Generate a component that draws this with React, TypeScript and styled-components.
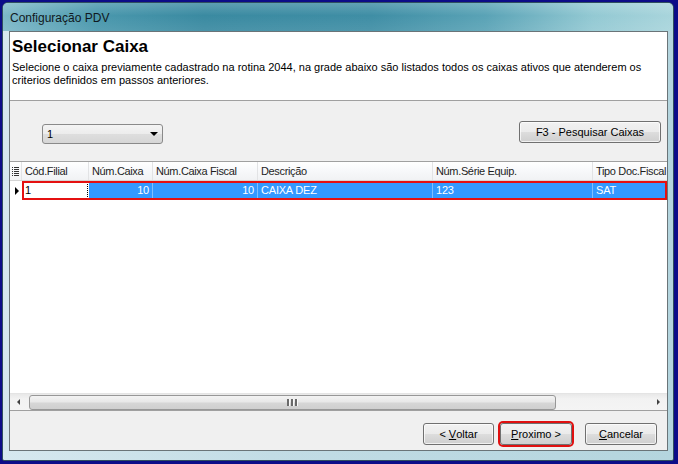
import React from "react";
import styled, { createGlobalStyle } from "styled-components";

const Global = createGlobalStyle`
  html, body { margin: 0; padding: 0; }
  body { width: 678px; height: 464px; overflow: hidden; background: #0c0c88; }
  * { box-sizing: border-box; }
`;

const UI_FONT = `"Liberation Sans", Arial, sans-serif`;

const Screen = styled.div`
  width: 678px;
  height: 464px;
  padding: 2px 4px 3px 2px;
  background: #0c0c88;
  font-family: ${UI_FONT};
`;

const Window = styled.div`
  width: 672px;
  height: 459px;
  border-radius: 6px 6px 2px 2px;
  border: 1px solid #2f4f5f;
  background: linear-gradient(90deg, #d6e8ef 0%, #c2dce5 40%, #b4d5de 100%);
  display: flex;
  flex-direction: column;
  overflow: hidden;
`;

const TitleBar = styled.div`
  height: 28px;
  flex: none;
  display: flex;
  align-items: center;
  padding: 2px 0 0 7px;
  background:
    linear-gradient(180deg, rgba(255,255,255,0.18) 0%, rgba(255,255,255,0) 45%, rgba(255,255,255,0.08) 100%),
    linear-gradient(90deg, #7db8c8 0%, #4a98ad 14%, #3a8aa1 30%, #3f8ea5 55%, #5aa3b6 72%, #93c9d3 88%, #a9d5dc 100%);
  font-size: 12px;
  color: #101820;
`;

const Client = styled.div`
  flex: 1;
  margin: 0 5px 9px 6px;
  border: 1px solid #6a7478;
  background: #f0f0f0;
  display: flex;
  flex-direction: column;
`;

const Header = styled.div`
  height: 69px;
  flex: none;
  background: #ffffff;
  border-bottom: 1px solid #a0a0a0;
  padding: 4px 0 0 2px;
`;

const Heading = styled.div`
  font-size: 17px;
  font-weight: bold;
  color: #000;
  line-height: 22px;
`;

const Description = styled.div`
  margin-top: 3px;
  font-size: 11px;
  line-height: 13px;
  color: #000;
  width: 630px;
`;

const Toolbar = styled.div`
  height: 60px;
  flex: none;
  display: flex;
  align-items: flex-start;
  justify-content: space-between;
  padding: 20px 6px 0 32px;
`;

const Combo = styled.div`
  margin-top: 3px;
  width: 121px;
  height: 20px;
  border: 1px solid #8a8a8a;
  border-radius: 3px;
  background: linear-gradient(180deg, #f4f4f4 0%, #ececec 50%, #dedede 51%, #d6d6d6 100%);
  display: flex;
  align-items: center;
  justify-content: space-between;
  padding: 0 4px 0 4px;
  font-size: 11px;
  color: #000;
`;

const Caret = styled.span`
  width: 0;
  height: 0;
  border-left: 4px solid transparent;
  border-right: 4px solid transparent;
  border-top: 4px solid #000;
`;

const Button = styled.div<{ $width: number; $highlight?: boolean; $gapLeft?: number }>`
  width: ${(p) => p.$width}px;
  height: 22px;
  margin-left: ${(p) => p.$gapLeft ?? 0}px;
  border: 1px solid #707070;
  border-radius: 3px;
  background: linear-gradient(180deg, #f2f2f2 0%, #ebebeb 48%, #dddddd 50%, #cfcfcf 100%);
  display: flex;
  align-items: center;
  justify-content: center;
  font-size: 11px;
  color: #000;
  box-shadow: ${(p) => (p.$highlight ? "0 0 0 2px #e01010" : "inset 0 0 0 1px rgba(255,255,255,0.7)")};
`;

const Underline = styled.span`
  text-decoration: underline;
`;

const Grid = styled.div`
  height: 250px;
  flex: none;
  background: #ffffff;
  border-top: 1px solid #a0a0a0;
  border-bottom: 1px solid #a0a0a0;
  display: flex;
  flex-direction: column;
  overflow: hidden;
`;

const cols = "12px 67px 64px 105px 175px 160px 80px";

const HeaderRow = styled.div`
  display: grid;
  grid-template-columns: ${cols};
  height: 19px;
  flex: none;
  background: linear-gradient(180deg, #ffffff 0%, #f7f8fa 50%, #f1f2f4 100%);
  border-bottom: 1px solid #d5d5d5;
`;

const HeadCell = styled.div`
  border-right: 1px solid #e2e3e5;
  padding: 0 1px 0 3px;
  font-size: 11px;
  letter-spacing: -0.35px;
  line-height: 18px;
  color: #1e1e1e;
  white-space: nowrap;
  overflow: hidden;
`;

const IndicatorHead = styled.div`
  border-right: 1px solid #e2e3e5;
  display: flex;
  align-items: center;
  justify-content: center;
`;

const DataRow = styled.div`
  position: relative;
  display: grid;
  grid-template-columns: ${cols};
  height: 19px;
  flex: none;
`;

const Indicator = styled.div`
  background: #ffffff;
  display: flex;
  align-items: center;
  justify-content: center;
`;

const Arrow = styled.span`
  width: 0;
  height: 0;
  border-top: 4px solid transparent;
  border-bottom: 4px solid transparent;
  border-left: 4px solid #000;
  margin-left: 1px;
`;

const Cell = styled.div<{ $right?: boolean; $focus?: boolean }>`
  background: ${(p) => (p.$focus ? "#ffffff" : "#3399ff")};
  color: ${(p) => (p.$focus ? "#000" : "#ffffff")};
  border-right: 1px solid ${(p) => (p.$focus ? "#ffffff" : "#7fbfff")};
  outline: ${(p) => (p.$focus ? "1px dotted #000" : "none")};
  outline-offset: -2px;
  padding: 0 3px;
  font-size: 11px;
  letter-spacing: -0.2px;
  line-height: 19px;
  text-align: ${(p) => (p.$right ? "right" : "left")};
  white-space: nowrap;
  overflow: hidden;
`;

const RowHighlight = styled.div`
  position: absolute;
  left: 12px;
  top: 0;
  right: 0;
  bottom: 0;
  border: 2px solid #e51010;
  pointer-events: none;
`;

const GridBody = styled.div`
  flex: 1;
  background: #ffffff;
`;

const ScrollBar = styled.div`
  height: 17px;
  flex: none;
  background: linear-gradient(180deg, #e8e8e8 0%, #f2f2f2 30%, #f4f4f4 100%);
  border-top: 1px solid #e4e4e4;
  display: flex;
  align-items: center;
`;

const ScrollArrow = styled.div<{ $dir: "left" | "right" }>`
  width: 17px;
  height: 16px;
  flex: none;
  display: flex;
  align-items: center;
  justify-content: center;
  &::before {
    content: "";
    width: 0;
    height: 0;
    border-top: 3px solid transparent;
    border-bottom: 3px solid transparent;
    ${(p) => (p.$dir === "left" ? "border-right: 3px solid #404040;" : "border-left: 3px solid #404040;")}
  }
`;

const Thumb = styled.div`
  width: 527px;
  height: 15px;
  margin-left: 2px;
  border: 1px solid #979797;
  border-radius: 3px;
  background: linear-gradient(180deg, #f3f3f3 0%, #e8e8e8 45%, #d6d6d6 55%, #cfcfcf 100%);
  display: flex;
  align-items: center;
  justify-content: center;
  gap: 1px;
`;

const Grip = styled.span`
  width: 2px;
  height: 7px;
  background: #6a6a6a;
  border-right: 1px solid #fafafa;
  box-sizing: content-box;
`;

const Spacer = styled.div`
  flex: 1;
`;

const Footer = styled.div`
  flex: 1;
  display: flex;
  justify-content: flex-end;
  align-items: flex-start;
  padding: 12px 10px 0 0;
`;

export default function App() {
  return (
    <>
      <Global />
      <Screen>
        <Window>
          <TitleBar>Configuração PDV</TitleBar>
          <Client>
            <Header>
              <Heading>Selecionar Caixa</Heading>
              <Description>
                Selecione o caixa previamente cadastrado na rotina 2044, na grade abaixo são listados todos os caixas ativos que atenderem os criterios definidos em passos anteriores.
              </Description>
            </Header>
            <Toolbar>
              <Combo>
                <span>1</span>
                <Caret />
              </Combo>
              <Button $width={142}>F3 - Pesquisar Caixas</Button>
            </Toolbar>
            <Grid>
              <HeaderRow>
                <IndicatorHead>
                  <svg width="7" height="9" viewBox="0 0 7 9">
                    <g fill="#333">
                      <rect x="0" y="0" width="1" height="1" />
                      <rect x="2" y="0" width="5" height="1" />
                      <rect x="0" y="2" width="1" height="1" />
                      <rect x="2" y="2" width="5" height="1" />
                      <rect x="0" y="4" width="1" height="1" />
                      <rect x="2" y="4" width="5" height="1" />
                      <rect x="0" y="6" width="1" height="1" />
                      <rect x="2" y="6" width="5" height="1" />
                      <rect x="0" y="8" width="1" height="1" />
                      <rect x="2" y="8" width="5" height="1" />
                    </g>
                  </svg>
                </IndicatorHead>
                <HeadCell>Cód.Filial</HeadCell>
                <HeadCell>Núm.Caixa</HeadCell>
                <HeadCell>Núm.Caixa Fiscal</HeadCell>
                <HeadCell>Descrição</HeadCell>
                <HeadCell>Núm.Série Equip.</HeadCell>
                <HeadCell>Tipo Doc.Fiscal</HeadCell>
              </HeaderRow>
              <DataRow>
                <Indicator>
                  <Arrow />
                </Indicator>
                <Cell $focus>1</Cell>
                <Cell $right>10</Cell>
                <Cell $right>10</Cell>
                <Cell>CAIXA DEZ</Cell>
                <Cell>123</Cell>
                <Cell>SAT</Cell>
                <RowHighlight />
              </DataRow>
              <GridBody />
              <ScrollBar>
                <ScrollArrow $dir="left" />
                <Thumb>
                  <Grip />
                  <Grip />
                  <Grip />
                </Thumb>
                <Spacer />
                <ScrollArrow $dir="right" />
              </ScrollBar>
            </Grid>
            <Footer>
              <Button $width={71}>
                &lt;&nbsp;<Underline>V</Underline>oltar
              </Button>
              <Button $width={72} $highlight $gapLeft={6}>
                <Underline>P</Underline>roximo &gt;
              </Button>
              <Button $width={72} $gapLeft={13}>
                <Underline>C</Underline>ancelar
              </Button>
            </Footer>
          </Client>
        </Window>
      </Screen>
    </>
  );
}
